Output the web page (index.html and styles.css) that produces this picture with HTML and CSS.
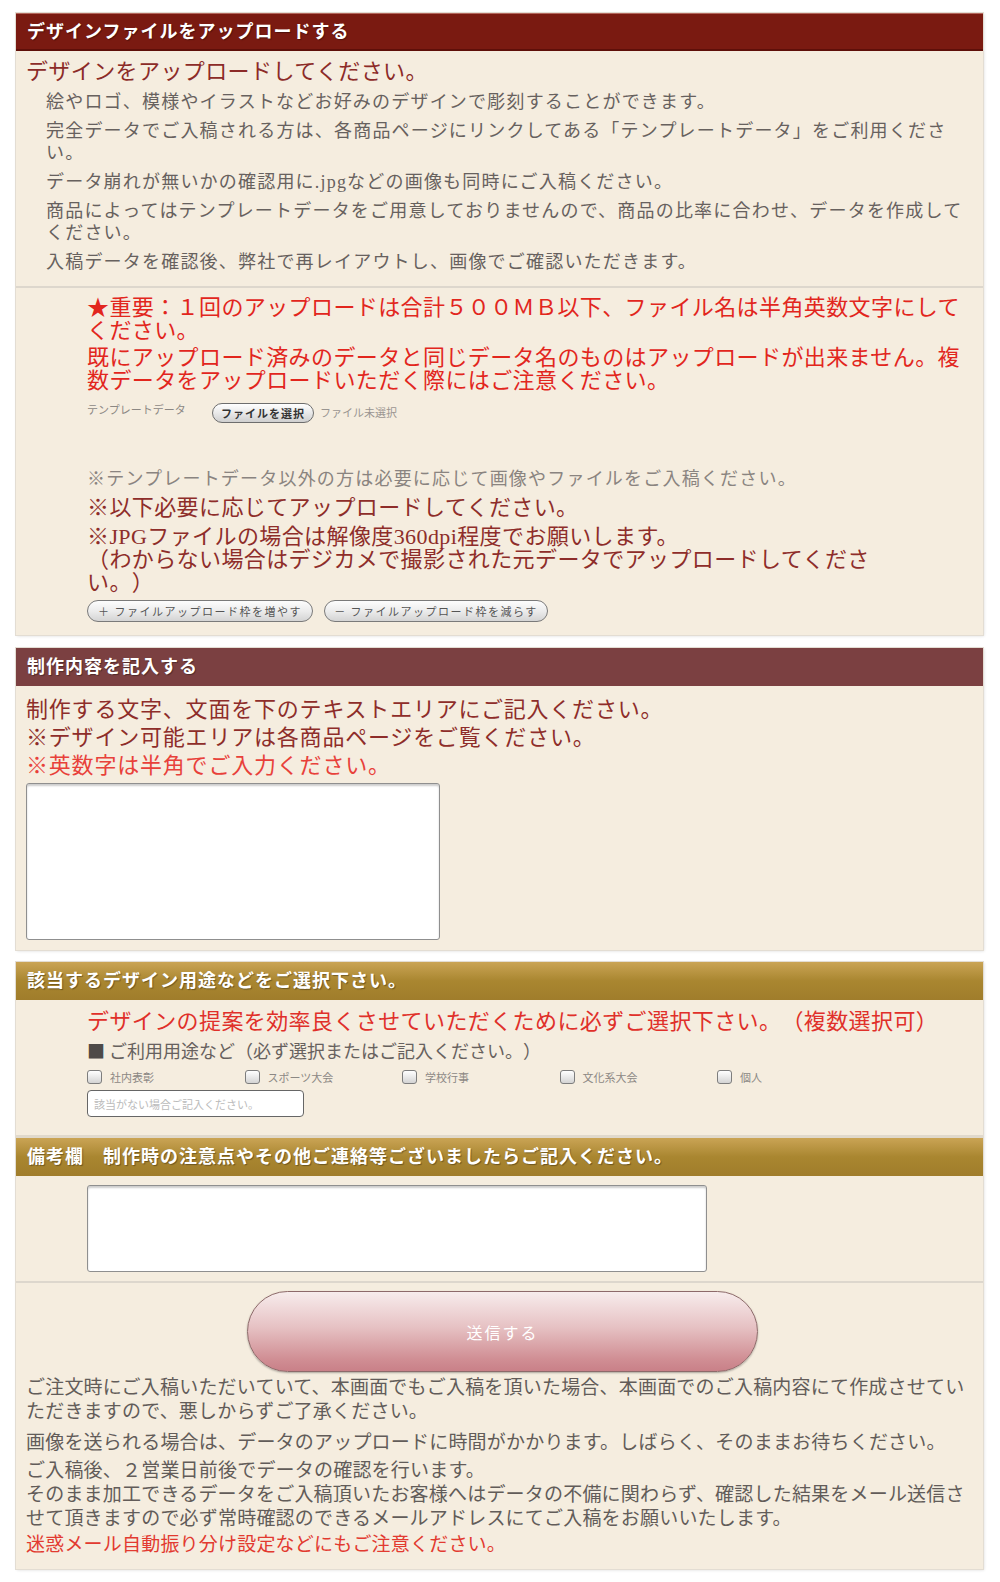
FILE: index.html
```html
<!DOCTYPE html>
<html lang="ja">
  <head>
    <meta charset="UTF-8" />
    <meta name="viewport" content="width=device-width, initial-scale=1.0" />
    <title>デザインファイルのアップロード</title>
    <link rel="stylesheet" href="styles.css">
  </head>
  <body>
    <div class="page">
      <!-- アップロード -->
      <section class="panel">
        <h2 class="panel-head head-upload">デザインファイルをアップロードする</h2>
        <div class="intro">
          <h3 class="lead">デザインをアップロードしてください。</h3>
          <p>絵やロゴ、模様やイラストなどお好みのデザインで彫刻することができます。</p>
          <p>完全データでご入稿される方は、各商品ページにリンクしてある「テンプレートデータ」をご利用ください。</p>
          <p>データ崩れが無いかの確認用に.jpgなどの画像も同時にご入稿ください。</p>
          <p>商品によってはテンプレートデータをご用意しておりませんので、商品の比率に合わせ、データを作成してください。</p>
          <p>入稿データを確認後、弊社で再レイアウトし、画像でご確認いただきます。</p>
        </div>
        <div class="upload">
          <p class="alert">★重要：１回のアップロードは合計５００ＭＢ以下、ファイル名は半角英数文字にしてください。</p>
          <p class="alert">既にアップロード済みのデータと同じデータ名のものはアップロードが出来ません。複数データをアップロードいただく際にはご注意ください。</p>
          <div class="file-row">
            <span class="file-label">テンプレートデータ</span>
            <button class="file-btn">ファイルを選択</button>
            <span class="file-none">ファイル未選択</span>
          </div>
          <p class="note">※テンプレートデータ以外の方は必要に応じて画像やファイルをご入稿ください。</p>
          <p class="dark">※以下必要に応じてアップロードしてください。</p>
          <p class="dark">※JPGファイルの場合は解像度360dpi程度でお願いします。<br>（わからない場合はデジカメで撮影された元データでアップロードしてください。）</p>
          <div class="frame-btns">
            <button class="pill">＋ ファイルアップロード枠を増やす</button>
            <button class="pill">－ ファイルアップロード枠を減らす</button>
          </div>
        </div>
      </section>

      <!-- 制作内容 -->
      <section class="panel">
        <h2 class="panel-head head-make">制作内容を記入する</h2>
        <div class="make">
          <p>制作する文字、文面を下のテキストエリアにご記入ください。</p>
          <p>※デザイン可能エリアは各商品ページをご覧ください。</p>
          <p class="red">※英数字は半角でご入力ください。</p>
          <textarea class="area-make"></textarea>
        </div>
      </section>

      <!-- 用途・備考・送信 -->
      <section class="panel">
        <h2 class="panel-head head-gold">該当するデザイン用途などをご選択下さい。</h2>
        <div class="usage">
          <p class="usage-alert">デザインの提案を効率良くさせていただくために必ずご選択下さい。（複数選択可）</p>
          <p class="usage-sub"><span class="sq">■</span> ご利用用途など（必ず選択またはご記入ください。）</p>
          <div class="checks">
            <label class="check"><span class="box"></span>社内表彰</label>
            <label class="check"><span class="box"></span>スポーツ大会</label>
            <label class="check"><span class="box"></span>学校行事</label>
            <label class="check"><span class="box"></span>文化系大会</label>
            <label class="check"><span class="box"></span>個人</label>
          </div>
          <input class="other" type="text" placeholder="該当がない場合ご記入ください。">
        </div>
        <h2 class="panel-head head-gold">備考欄　制作時の注意点やその他ご連絡等ございましたらご記入ください。</h2>
        <div class="remarks">
          <textarea class="area-remarks"></textarea>
        </div>
        <div class="send">
          <button class="submit">送信する</button>
          <p>ご注文時にご入稿いただいていて、本画面でもご入稿を頂いた場合、本画面でのご入稿内容にて作成させていただきますので、悪しからずご了承ください。</p>
          <p>画像を送られる場合は、データのアップロードに時間がかかります。しばらく、そのままお待ちください。</p>
          <p class="after">ご入稿後、２営業日前後でデータの確認を行います。<br>そのまま加工できるデータをご入稿頂いたお客様へはデータの不備に関わらず、確認した結果をメール送信させて頂きますので必ず常時確認のできるメールアドレスにてご入稿をお願いいたします。</p>
          <p class="warn">迷惑メール自動振り分け設定などにもご注意ください。</p>
        </div>
      </section>
    </div>
  </body>
</html>
```
FILE: styles.css
```css
* {
  box-sizing: border-box;
  margin: 0;
}
body {
  margin: 0;
  background: #fff;
  font-family: "Liberation Serif", "Noto Sans CJK JP", serif;
  color: #67615e;
  text-spacing-trim: space-all;
}
.page {
  padding: 13px 17px 15px 16px;
}

/*---パネル---*/
.panel {
  background: #f5eddf;
  box-shadow: 0 0 0 1px #e3ddd3, 1px 1px 3px rgba(0, 0, 0, 0.15);
  margin-bottom: 13px;
}
.panel:nth-child(2) {
  margin-bottom: 12px;
}
.panel-head {
  height: 38px;
  line-height: 38px;
  padding-left: 11px;
  font-size: 18px;
  letter-spacing: 1px;
  font-weight: bold;
  color: #fff;
  text-shadow: 1px 1px 1px rgba(0, 0, 0, 0.35);
}
.head-upload {
  background: #7a1a11;
  box-shadow: inset 0 1px 0 #b4675d, inset 0 -2px 0 #5e0f09;
}
.head-make {
  background: #7b4041;
}
.head-gold {
  background: linear-gradient(#caa455, #a98630 50%, #a07d2b);
}

/*---アップロード---*/
.intro {
  padding: 6px 10px 13px;
  border-bottom: 2px solid #ddd7cd;
}
.lead {
  font-size: 22px;
  line-height: 30px;
  font-weight: normal;
  letter-spacing: 0.4px;
  color: #8c2b28;
}
.intro p {
  font-size: 18px;
  line-height: 22px;
  letter-spacing: 1.2px;
  padding-left: 20px;
  margin-top: 7px;
}
.intro .lead + p {
  margin-top: 4px;
}
.upload {
  padding: 8px 10px 13px 71px;
}
.alert {
  font-size: 22px;
  line-height: 23px;
  letter-spacing: 0.4px;
  color: #e2261d;
}
.alert + .alert {
  margin-top: 4px;
}
.file-row {
  display: flex;
  align-items: flex-start;
  height: 20px;
  margin-top: 11px;
}
.file-label {
  width: 125px;
  font-size: 11px;
  line-height: 12px;
  padding-top: 1px;
  color: #8c8884;
}
.file-btn {
  width: 102px;
  height: 20px;
  padding: 0;
  border: 1.5px solid #6d6d6d;
  border-radius: 10px;
  background: linear-gradient(#fff, #e9e9e9 50%, #cfcfcf);
  font: bold 11px "Noto Sans CJK JP", sans-serif;
  letter-spacing: 1px;
  color: #333;
}
.file-none {
  margin-left: 6px;
  font-size: 11px;
  line-height: 20px;
  color: #9a9591;
}
.note {
  margin-top: 45px;
  font-size: 18px;
  line-height: 22px;
  letter-spacing: 1.2px;
  color: #8a8480;
}
.dark {
  max-width: 820px;
  margin-top: 6px;
  font-size: 22px;
  line-height: 23px;
  letter-spacing: 0.4px;
  color: #8e2d2a;
}
.frame-btns {
  display: flex;
  gap: 11px;
  margin-top: 6px;
}
.pill {
  width: 226px;
  height: 22px;
  padding: 0;
  border: 1.5px solid #7a7a7a;
  border-radius: 11px;
  background: linear-gradient(#fdfdfd, #ececec 50%, #d4d4d4);
  font: 11px "Noto Sans CJK JP", sans-serif;
  letter-spacing: 1.5px;
  color: #555;
}
.pill + .pill {
  width: 224px;
}

/*---制作内容---*/
.make {
  padding: 10px 10px;
}
.make p {
  font-size: 22px;
  line-height: 28px;
  letter-spacing: 0.8px;
  color: #8e2d2a;
}
.make .red {
  color: #e8413a;
}
textarea {
  display: block;
  background: #fff;
  border: 1px solid #8f8f8f;
  border-radius: 3px;
  box-shadow: inset 0 2px 2px rgba(0, 0, 0, 0.2);
  resize: none;
}
.area-make {
  width: 414px;
  height: 157px;
  margin-top: 3px;
}

/*---用途---*/
.usage {
  padding: 8px 10px 18px 71px;
  border-bottom: 3px solid #e0d9cc;
}
.usage-alert {
  font-size: 22px;
  line-height: 28px;
  letter-spacing: 0.4px;
  color: #e0302a;
}
.usage-sub {
  font-family: "Noto Sans CJK JP", sans-serif;
  font-size: 18px;
  line-height: 28px;
  color: #67615e;
}
.sq {
  color: #4e4a48;
}
.checks {
  display: flex;
  height: 16px;
  margin-top: 5px;
}
.check {
  display: flex;
  align-items: center;
  width: 157.5px;
  font-size: 11px;
  color: #8c8884;
}
.box {
  width: 15px;
  height: 14px;
  margin-right: 8px;
  border: 1px solid #7d7d7d;
  border-radius: 3px;
  background: linear-gradient(#fff, #d4d4d4);
}
.other {
  display: block;
  width: 217px;
  height: 27px;
  margin-top: 5px;
  padding: 0 6px;
  border: 1.5px solid #666;
  border-radius: 4px;
  background: #fff;
  font: 11px "Noto Sans CJK JP", sans-serif;
}
.other::placeholder {
  color: #bbb;
}

/*---備考・送信---*/
.remarks {
  padding: 9px 10px 9px 71px;
  border-bottom: 2px solid #ddd7cd;
}
.area-remarks {
  width: 620px;
  height: 87px;
}
.send {
  padding: 8px 10px 12px;
}
.submit {
  display: block;
  width: 511px;
  height: 81px;
  margin-left: 221px;
  border: 1.5px solid #8d6a6a;
  border-radius: 41px;
  background: linear-gradient(#f7ecec, #e6c1c3 45%, #d08e94 85%, #c98088);
  box-shadow: 0 1px 2px rgba(0, 0, 0, 0.3);
  font: 16px "Noto Sans CJK JP", sans-serif;
  letter-spacing: 2px;
  color: #fff;
}
.send p {
  margin-top: 2px;
  font-size: 19px;
  line-height: 24px;
  letter-spacing: 0.2px;
  color: #625c59;
}
.send .submit + p {
  margin-top: 4px;
}
.send p:nth-of-type(2) {
  margin-top: 7px;
}
.send .after {
  margin-top: 4px;
}
.send .warn {
  color: #e23a30;
}
```
